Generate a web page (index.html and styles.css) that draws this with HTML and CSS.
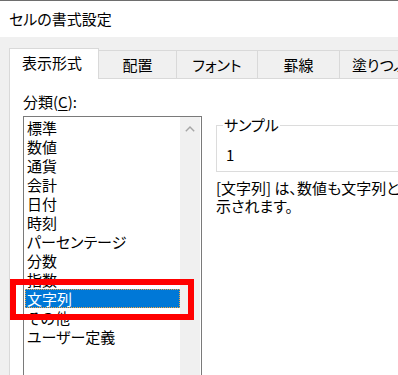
FILE: index.html
```html
<!DOCTYPE html>
<html lang="ja">
<head>
<meta charset="utf-8">
<title>セルの書式設定</title>
<link rel="stylesheet" href="styles.css">
</head>
<body>
<div class="titlebar">セルの書式設定</div>
<div class="dialog">
  <div class="tabs">
    <div class="tab active">表示形式</div>
    <div class="tab t-align">配置</div>
    <div class="tab t-font">フォント</div>
    <div class="tab t-border">罫線</div>
    <div class="tab t-fill">塗りつぶし</div>
  </div>
  <div class="panel">
    <div class="left">
      <div class="label">分類(<u>C</u>):</div>
      <div class="listbox">
        <ul class="items">
          <li>標準</li>
          <li>数値</li>
          <li>通貨</li>
          <li>会計</li>
          <li>日付</li>
          <li>時刻</li>
          <li>パーセンテージ</li>
          <li>分数</li>
          <li>指数</li>
          <li class="selected">文字列</li>
          <li>その他</li>
          <li>ユーザー定義</li>
        </ul>
        <div class="scrollbar">
          <svg class="arrow" width="10" height="6" viewBox="0 0 10 6"><polyline points="0.8,5.2 5,1 9.2,5.2" fill="none" stroke="#a6a6a6" stroke-width="1.4"/></svg>
        </div>
      </div>
    </div>
    <div class="right">
      <fieldset class="sample">
        <legend>サンプル</legend>
        <div class="sample-value">1</div>
      </fieldset>
      <p class="desc"><span class="line">[文字列] は、数値も文字列として表</span><br><span class="line">示されます。</span></p>
    </div>
  </div>
</div>
<div class="annotation"></div>
</body>
</html>
```

FILE: styles.css
```css
* { box-sizing: border-box; }
html, body {
  margin: 0;
  padding: 0;
}
body {
  width: 398px;
  height: 375px;
  overflow: hidden;
  background: #f0f0f0;
  color: #000;
  font-family: "Noto Sans CJK JP", "Noto Sans", sans-serif;
  font-size: 15px;
  font-feature-settings: "palt";
  position: relative;
}
.titlebar {
  height: 37px;
  border-top: 1px solid #6e6e6e;
  background: #fff;
  line-height: 36px;
  padding-left: 9px;
  white-space: nowrap;
}
.dialog {
  padding: 11px 0 0 9px;
}
.tabs {
  display: flex;
  align-items: flex-end;
  height: 30px;
  white-space: nowrap;
}
.tab {
  flex: none;
  height: 28px;
  border-top: 1px solid #d9d9d9;
  border-right: 1px solid #d9d9d9;
  background: #f0f0f0;
  line-height: 27px;
  text-align: center;
}
.tab.active {
  position: relative;
  z-index: 1;
  width: 90px;
  height: 31px;
  margin-bottom: -1px;
  border: 1px solid #d9d9d9;
  border-bottom: none;
  background: #fff;
  line-height: 28px;
  padding: 0 0 2px 12px;
  text-align: left;
}
.t-align { width: 78px; }
.t-font { width: 81px; }
.t-border { width: 82px; }
.t-fill { width: 100px; padding-left: 3px; text-align: left; padding-left: 12px; }
.panel {
  display: flex;
  align-items: flex-start;
  width: 420px;
  height: 320px;
  background: #fff;
  border: 1px solid #d9d9d9;
  border-right: none;
  padding: 14px 0 0 13px;
}
.left {
  flex: none;
  width: 179px;
}
.label {
  line-height: 18px;
  white-space: nowrap;
}
.label u {
  text-underline-offset: 2px;
}
.listbox {
  margin-top: 5px;
  height: 300px;
  border: 1px solid #7a7a7a;
  display: flex;
  padding-right: 1px;
}
.items {
  list-style: none;
  margin: 0;
  padding: 1px 0 0 1px;
  flex: 1;
}
.items li {
  height: 19px;
  line-height: 19px;
  padding-left: 2px;
  white-space: nowrap;
}
.items li.selected {
  background: #0078d7;
  color: #fff;
  outline: 1px dotted #f4a640;
  outline-offset: -1px;
}
.scrollbar {
  flex: none;
  width: 20px;
  background: #f0f0f0;
  display: flex;
  justify-content: center;
  padding-top: 9px;
}
.arrow {
  display: block;
}
.right {
  flex: none;
  margin-left: 14px;
  padding-top: 23px;
  width: 300px;
}
.sample {
  margin: 0;
  padding: 12px 0 7px 8px;
  border: 1px solid #dcdcdc;
  min-width: 0;
}
.sample legend {
  margin-left: -2px;
  padding: 0 1px;
  line-height: 18px;
}
.sample-value {
  line-height: 18px;
  padding-left: 1px;
}
.desc {
  margin: 7px 0 0;
  line-height: 18px;
  white-space: nowrap;
}
.annotation {
  position: absolute;
  left: 10px;
  top: 279px;
  width: 184px;
  height: 41px;
  border: 6px solid #ff0000;
}
```
